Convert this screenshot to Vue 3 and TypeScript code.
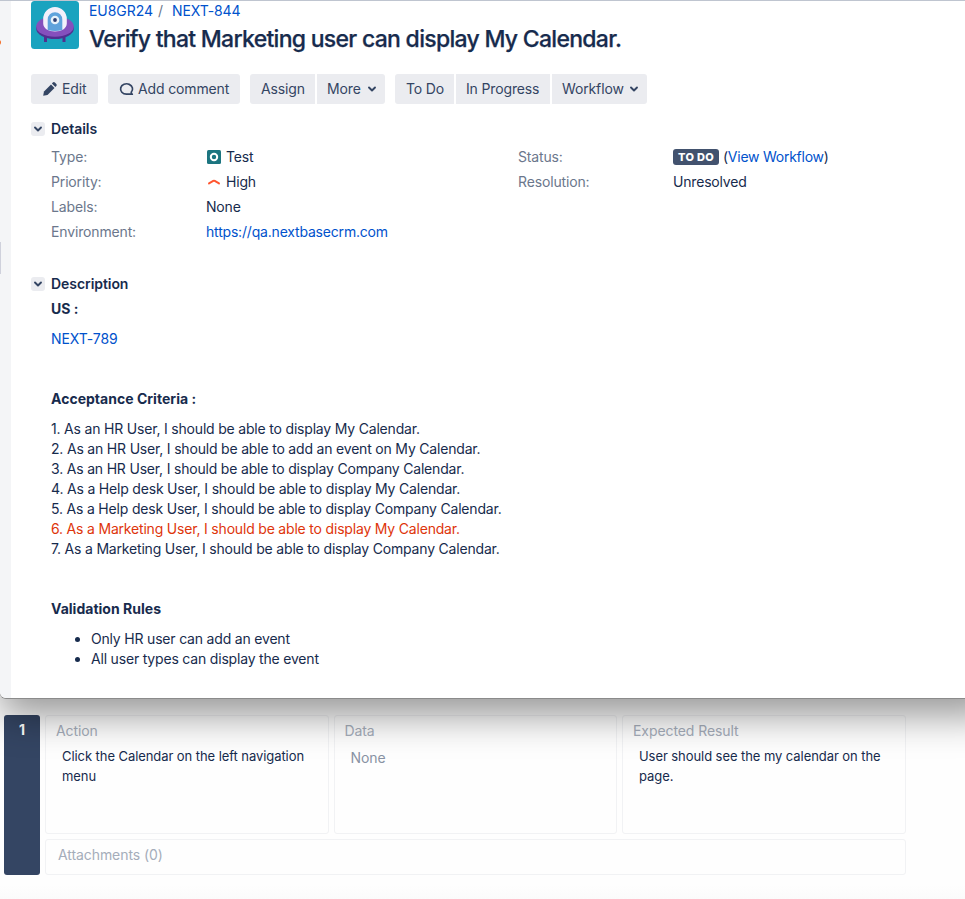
<script setup lang="ts">
interface Criterion { text: string; active?: boolean }

const criteria: Criterion[] = [
  { text: '1. As an HR User, I should be able to display My Calendar.' },
  { text: '2. As an HR User, I should be able to add an event on My Calendar.' },
  { text: '3. As an HR User, I should be able to display Company Calendar.' },
  { text: '4. As a Help desk User, I should be able to display My Calendar.' },
  { text: '5. As a Help desk User, I should be able to display Company Calendar.' },
  { text: '6. As a Marketing User, I should be able to display My Calendar.', active: true },
  { text: '7. As a Marketing User, I should be able to display Company Calendar.' },
]

const rules: string[] = ['Only HR user can add an event', 'All user types can display the event']

const cells = [
  { label: 'Action', value: 'Click the Calendar on the left navigation menu', empty: false },
  { label: 'Data', value: 'None', empty: true },
  { label: 'Expected Result', value: 'User should see the my calendar on the page.', empty: false },
]
</script>

<template>
  <div class="page">
    <section class="window">
      <aside class="rail">
        <i class="rail-dot"></i>
        <i class="rail-handle"></i>
      </aside>
      <main class="issue">
        <header class="head">
          <svg class="avatar" width="48" height="48" viewBox="0 0 48 48">
            <rect width="48" height="48" rx="3.5" fill="#1aa3bf" />
            <path d="M13 34h3v7h-3zM31.500 34h3v7h-3z" fill="#50308f" />
            <ellipse cx="24" cy="27.500" rx="18.800" ry="10.500" fill="#50308f" />
            <ellipse cx="24" cy="25.500" rx="18.800" ry="10.300" fill="#8550bd" />
            <path d="M12.200 18a11.800 12 0 0 1 23.600 0v4.500c0 5-5.500 8-11.800 8s-11.800-3-11.800-8z" fill="#f3f0fb" />
            <path d="M16.700 18.500a7.300 7.300 0 0 1 14.600 0v10.500q-7.300 2-14.600 0z" fill="#5fa2dc" />
            <circle cx="24" cy="19" r="4.300" fill="#e8f1fa" />
            <circle cx="24" cy="19" r="1.900" fill="#2f3f73" />
          </svg>
          <div>
            <nav class="crumbs">
              <a>EU8GR24</a><span class="slash">/</span><a>NEXT-844</a>
            </nav>
            <h1>Verify that Marketing user can display My Calendar.</h1>
          </div>
        </header>

        <div class="toolbar">
          <div class="group">
            <button class="edit">
              <svg width="16" height="16" viewBox="0 0 16 16" fill="#344563">
                <path d="M1.200 14.700l.8-4.300 7-7 3.500 3.500-7 7z" />
                <path d="M9.900 2.500l.9-.9a1.500 1.500 0 0 1 2.100 0l1.400 1.400a1.500 1.500 0 0 1 0 2.100l-.9.9z" />
              </svg>Edit
            </button>
          </div>
          <div class="group">
            <button class="comment">
              <svg width="16" height="16" viewBox="0 0 16 16" fill="none" stroke="#344563" stroke-width="1.700">
                <path d="M12.200 11.300a6 5.200 0 1 0-4.700 1.900h5.800q-1.200-.6-1.100-1.900z" stroke-linejoin="round" />
              </svg>Add comment
            </button>
          </div>
          <div class="group">
            <button class="assign">Assign</button>
            <button class="more">More<svg class="caret" width="10" height="10" viewBox="0 0 10 10"><path d="M2 3.500l3 3 3-3" /></svg></button>
          </div>
          <div class="group">
            <button class="todo">To Do</button>
            <button class="progress">In Progress</button>
            <button class="workflow">Workflow<svg class="caret" width="10" height="10" viewBox="0 0 10 10"><path d="M2 3.500l3 3 3-3" /></svg></button>
          </div>
        </div>

        <section class="module">
          <h2><span class="toggle"><svg class="caret" width="10" height="10" viewBox="0 0 10 10"><path d="M2 3.500l3 3 3-3" /></svg></span>Details</h2>
          <div class="details">
            <dl>
              <dt>Type:</dt>
              <dd>
                <svg class="glyph" width="14" height="14" viewBox="0 0 14 14"><rect width="14" height="14" rx="1.500" fill="#1c7580" /><circle cx="7" cy="7" r="3.200" fill="none" stroke="#fff" stroke-width="2" /></svg>Test
              </dd>
              <dt>Priority:</dt>
              <dd>
                <svg class="glyph" width="14" height="14" viewBox="0 0 14 14"><path d="M2 8.400l4.200-2.500q.8-.4 1.600 0l4.200 2.500" fill="none" stroke="#ff5630" stroke-width="1.900" stroke-linecap="round" /></svg>High
              </dd>
              <dt>Labels:</dt>
              <dd>None</dd>
              <dt>Environment:</dt>
              <dd><a class="env">https://qa.nextbasecrm.com</a></dd>
            </dl>
            <dl>
              <dt>Status:</dt>
              <dd><span class="lozenge">TO DO</span><span class="wf">(<a>View Workflow</a>)</span></dd>
              <dt>Resolution:</dt>
              <dd>Unresolved</dd>
            </dl>
          </div>
        </section>

        <section class="module description">
          <h2><span class="toggle"><svg class="caret" width="10" height="10" viewBox="0 0 10 10"><path d="M2 3.500l3 3 3-3" /></svg></span>Description</h2>
          <div class="body">
            <p class="us"><b>US :</b></p>
            <p><a class="ref">NEXT-789</a></p>
            <p class="spaced"><b>Acceptance Criteria :</b></p>
            <div class="criteria">
              <div v-for="c in criteria" :key="c.text" :class="{ active: c.active }">{{ c.text }}</div>
            </div>
            <p class="spaced"><b>Validation Rules</b></p>
            <ul>
              <li v-for="r in rules" :key="r">{{ r }}</li>
            </ul>
          </div>
        </section>
      </main>
    </section>

    <section class="step">
      <div class="num">1</div>
      <div class="grid">
        <div v-for="c in cells" :key="c.label" class="cell">
          <div class="label">{{ c.label }}</div>
          <div class="value" :class="{ empty: c.empty }">{{ c.value }}</div>
        </div>
        <div class="attachments">Attachments (0)</div>
      </div>
    </section>
  </div>
</template>

<style>
body { margin: 0; background: #fff; }
</style>

<style scoped>
* { box-sizing: border-box; }
.page {
  width: 965px; height: 899px; overflow: hidden; background: linear-gradient(#fefefe 885px, #fbfbfb);
  font: 14px/20px Inter, "Liberation Sans", sans-serif; color: #172b4d; letter-spacing: -0.19px;
}
.window {
  position: relative; z-index: 1; display: flex; width: 995px; height: 698px; background: #fff;
  border-top: 1px solid #bfc5d0; border-bottom-left-radius: 6px;
  box-shadow: 0 1px 0 #8b8b8b, 0 18px 38px rgba(0, 0, 0, .4);
}
.rail { position: relative; width: 11px; flex: none; background: #f4f5f7; border-bottom-left-radius: 6px; }
.rail-dot { position: absolute; left: -4px; top: 39px; width: 5px; height: 5px; border-radius: 50%; background: #f4702b; }
.rail-handle { position: absolute; left: 0; top: 241px; width: 1px; height: 32px; background: #cfd1dc; }
.issue { flex: 1; padding-left: 20px; }
a { color: #0052cc; }
h1, h2, p, ul, dl, dd { margin: 0; padding: 0; }
.head { display: flex; gap: 10px; height: 73px; }
.avatar { flex: none; }
.crumbs { display: flex; height: 20px; letter-spacing: -0.06px; }
.slash { width: 19px; padding-left: 5px; color: #6b778c; }
h1 {
  font-size: 23px; line-height: 28px; font-weight: 500; letter-spacing: -0.71px; white-space: nowrap; margin-top: 4px;
  -webkit-text-stroke: 0.25px #172b4d;
}
.toolbar { display: flex; gap: 10px; height: 30px; }
.group { display: flex; gap: 2px; border-radius: 3px; overflow: hidden; }
button {
  display: flex; align-items: center; justify-content: flex-start; height: 30px; border: 0; padding: 0 0 0 11px; white-space: nowrap;
  background: #ebecf0; color: #344563; font: inherit; letter-spacing: -0.14px;
}
.edit { width: 67px; gap: 4px; }
.comment { width: 132px; gap: 3px; }
.assign { width: 65px; }
.more { width: 68px; padding-left: 10px; }
.todo { width: 59px; }
.progress { width: 94px; padding-left: 10px; }
.workflow { width: 95px; padding-left: 10px; }
.caret { fill: none; stroke: #344563; stroke-width: 1.9; stroke-linecap: round; stroke-linejoin: round; }
button .caret { margin-left: 6px; }
.workflow .caret { margin-left: 5px; }
.module { padding-top: 15px; }
h2 { display: flex; align-items: center; gap: 6px; font-size: 14px; line-height: 20px; font-weight: 600; letter-spacing: -0.06px; }
.toggle { display: flex; align-items: center; justify-content: center; width: 14px; height: 14px; border-radius: 3px; background: #ebecf0; }
.details { display: grid; grid-template-columns: 467px 1fr; padding: 5px 0 0 20px; height: 120px; }
dl { display: grid; grid-template-columns: 155px 1fr; grid-auto-rows: 25px; line-height: 25px; align-content: start; }
dt { color: #6b778c; letter-spacing: -0.15px; }
dd { display: flex; align-items: center; }
.glyph { margin: 0 5px 0 1px; }
.wf { letter-spacing: -0.25px; }
.lozenge {
  width: 46px; height: 16px; margin-right: 4px; border-radius: 3px; background: #42526e; color: #fff;
  font-size: 11px; line-height: 16px; font-weight: 800; text-align: center; letter-spacing: 0.3px;
}
.description { padding-top: 15px; }
.body { padding-left: 20px; }
.ref { letter-spacing: -0.05px; }
b { font-weight: 700; letter-spacing: 0.02px; }
.us { padding: 5px 0 10px; }
.spaced { padding: 40px 0 10px; }
ul { padding-left: 40px; }
.active { color: #de350b; }
.step { display: flex; gap: 5px; padding: 17px 0 0 4px; }
.num { width: 36px; height: 160px; border-radius: 3px; background: #344563; color: #fff; font-weight: 700; text-align: center; padding-top: 5px; }
.grid { display: grid; grid-template-columns: 284px 283px 284px; grid-template-rows: 119px 36px; gap: 5px; }
.cell, .attachments { border: 1px solid #f1f2f4; border-radius: 3px; }
.cell { padding: 5px 10px; }
.cell:nth-child(2) { padding-left: 9.5px; }
.label, .attachments { color: #a5adba; letter-spacing: -0.08px; }
.value { padding: 5px 6px 0; font-size: 13px; letter-spacing: -0.07px; }
.empty { font-size: 14px; padding-top: 7px; color: #8993a4; }
.attachments { grid-column: 1 / -1; padding: 5px 12px; }
</style>
